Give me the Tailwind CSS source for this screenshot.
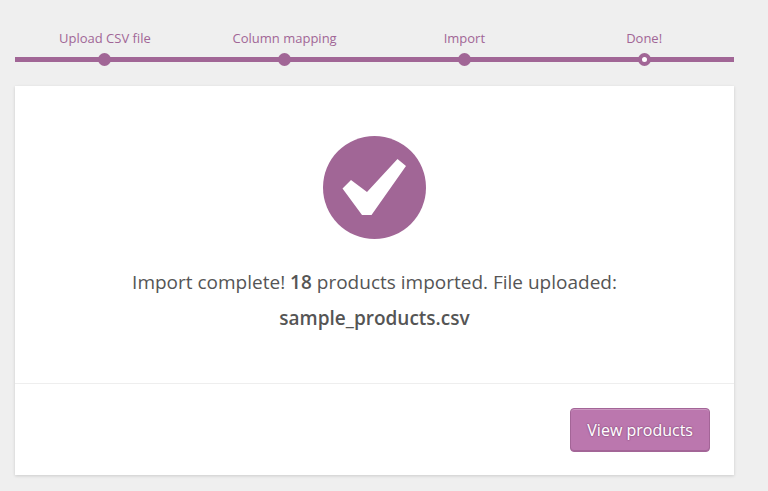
<!DOCTYPE html>
<html lang="en">
<head>
    <meta charset="UTF-8">
    <meta name="viewport" content="width=device-width, initial-scale=1.0">
    <title>Import Products</title>
    <script src="https://cdn.jsdelivr.net/npm/@tailwindcss/browser@4"></script>
</head>
<body class="bg-[#efefef] font-['Segoe_UI','Open_Sans',sans-serif] text-[#555555]">
    <main class="ml-[15px] mr-[34px] pt-7 pb-4">
        <!-- Steps: the line is the list's background, centred on the dots -->
        <ol class="grid grid-cols-4 bg-linear-to-r from-[#a16696] to-[#a16696] bg-[length:100%_5px] bg-[position:0_29px] bg-no-repeat text-center text-[13px] leading-5 text-[#a16696]">
            <li class="flex flex-col items-center gap-[5px]">
                <span>Upload CSV file</span>
                <span class="size-[13px] rounded-full bg-[#a16696]"></span>
            </li>
            <li class="flex flex-col items-center gap-[5px]">
                <span>Column mapping</span>
                <span class="size-[13px] rounded-full bg-[#a16696]"></span>
            </li>
            <li class="flex flex-col items-center gap-[5px]">
                <span>Import</span>
                <span class="size-[13px] rounded-full bg-[#a16696]"></span>
            </li>
            <li class="flex flex-col items-center gap-[5px]" aria-current="step">
                <span>Done!</span>
                <span class="size-[13px] rounded-full border-4 border-[#a16696] bg-white"></span>
            </li>
        </ol>

        <!-- Result -->
        <div class="mt-5 bg-white shadow-[0_1px_3px_rgba(0,0,0,0.15)]">
            <section class="flex flex-col items-center px-6 pt-[50px] pb-[47px] text-center">
                <svg class="size-[103px]" viewBox="0 0 103 103" aria-hidden="true">
                    <circle cx="51.5" cy="51.5" r="51.5" fill="#a16696"/>
                    <path d="M28 44 44 56 74.500 23 83 30 48.500 79H39L19.500 52.500Z" fill="#fff"/>
                </svg>
                <p class="mt-[25px] max-w-[520px] text-[19px] leading-9">Import complete! <strong class="font-semibold">18</strong> products imported. File uploaded: <strong class="font-semibold">sample_products.csv</strong></p>
            </section>
            <div class="flex justify-end border-t border-[#eeeeee] px-6 pt-6 pb-[23px]">
                <button type="button" class="h-11 rounded-[4px] border border-[#a36597] bg-[#bb77ae] px-4 text-[16px] text-white shadow-[inset_0_1px_0_rgba(255,255,255,0.25),inset_0_-1px_0_#a36597] text-shadow-[0_-1px_1px_#a36597,1px_0_1px_#a36597,0_1px_1px_#a36597,-1px_0_1px_#a36597]">View products</button>
            </div>
        </div>
    </main>
</body>
</html>
